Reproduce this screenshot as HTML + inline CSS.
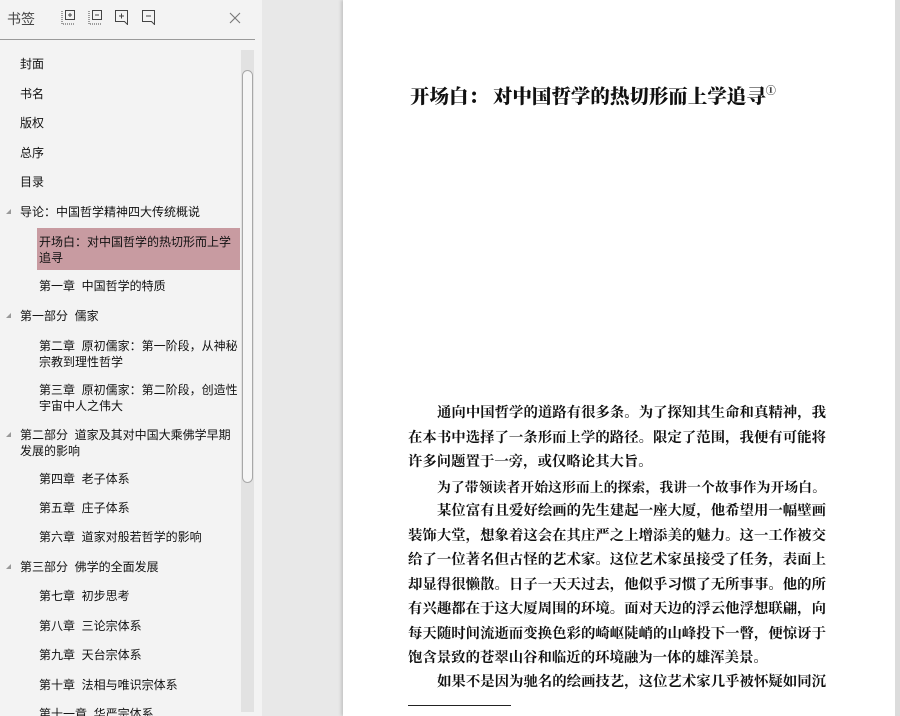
<!DOCTYPE html>
<html><head><meta charset="utf-8"><style>
*{margin:0;padding:0;box-sizing:border-box}
html,body{width:900px;height:716px;overflow:hidden}
body{background:#e8e8e8;position:relative;font-family:"Liberation Sans","Noto Sans CJK SC",sans-serif}
#side{position:absolute;left:0;top:0;width:262px;height:716px;background:#f3f3f3;overflow:hidden}
.hd{position:absolute;left:7px;top:9px;font-size:14px;color:#444}
.ic{position:absolute;top:10px}
.hr{position:absolute;left:0;top:39px;width:255px;height:1px;background:#9a9a9a}
.it{position:absolute;font-size:12px;color:#111;line-height:16px;white-space:nowrap}
.l1{left:20px}.l2{left:39px}
.ar{position:absolute;left:6px;width:0;height:0;border-left:5px solid transparent;border-bottom:5px solid #999}
.hl{position:absolute;left:37px;top:228px;width:203px;height:42px;background:#c89ba1}
#sb{position:absolute;left:241px;top:50px;width:13px;height:662px;background:#e2e2e2}
#th{position:absolute;left:242px;top:70px;width:11px;height:413px;border:1px solid #a8a8a8;border-radius:6px;background:#f6f6f6}
#page{position:absolute;left:343px;top:0;width:552px;height:716px;background:#fff;box-shadow:-2px 0 3px rgba(0,0,0,.15)}
#rg{position:absolute;left:895px;top:0;width:5px;height:716px;background:#dcdcdc}
.ttl{position:absolute;left:410px;top:81px;font-size:19.5px;font-weight:900;color:#111;font-family:"Noto Serif CJK SC","Noto Sans CJK SC",serif;white-space:nowrap}
.ttl sup{font-size:10px;vertical-align:9px}
.ln{position:absolute;left:408px;width:418px;height:24px;font-size:14.4px;line-height:24px;color:#111;font-family:"Noto Serif CJK SC",serif;font-weight:700;white-space:nowrap;text-align:justify;text-align-last:justify}
.ln.i{left:437px;width:389px}
.ln.n{text-align-last:left}
.fn{position:absolute;left:408px;top:705px;width:103px;height:1px;background:#222}
</style></head><body>
<div id="side">
<div class="hd">书签</div>
<svg class="ic" style="left:61px" width="15" height="15" viewBox="0 0 15 15" fill="none" stroke="#444"><path d="M1 1v13h13" stroke-dasharray="1 1"/><rect x="4.5" y="0.5" width="9" height="9"/><path d="M7 5h4M9 3v4"/></svg>
<svg class="ic" style="left:88px" width="15" height="15" viewBox="0 0 15 15" fill="none" stroke="#444"><path d="M1 1v13h13" stroke-dasharray="1 1"/><rect x="4.5" y="0.5" width="9" height="9"/><path d="M7 5h4"/></svg>
<svg class="ic" style="left:115px" width="14" height="15" viewBox="0 0 14 15" fill="none" stroke="#444"><path d="M0.5 0.5h12v14l-3-3h-9z"/><path d="M4 6h5M6.5 3.5v5"/></svg>
<svg class="ic" style="left:142px" width="14" height="15" viewBox="0 0 14 15" fill="none" stroke="#444"><path d="M0.5 0.5h12v14l-3-3h-9z"/><path d="M4 6h5"/></svg>
<svg style="position:absolute;left:229px;top:12px" width="12" height="12" viewBox="0 0 12 12" stroke="#777" stroke-width="1.1"><path d="M1 1l10 10M11 1L1 11"/></svg>
<div class="hr"></div>
<div class="hl"></div>
<div class="it l1" style="top:56px">封面</div>
<div class="it l1" style="top:86px">书名</div>
<div class="it l1" style="top:115px">版权</div>
<div class="it l1" style="top:145px">总序</div>
<div class="it l1" style="top:174px">目录</div>
<div class="ar" style="top:209px"></div><div class="it l1" style="top:204px">导论：中国哲学精神四大传统概说</div>
<div class="it l2" style="top:234px">开场白：对中国哲学的热切形而上学<br>追寻</div>
<div class="it l2" style="top:278px">第一章&nbsp;&nbsp;中国哲学的特质</div>
<div class="ar" style="top:313px"></div><div class="it l1" style="top:308px">第一部分&nbsp;&nbsp;儒家</div>
<div class="it l2" style="top:338px">第二章&nbsp;&nbsp;原初儒家：第一阶段，从神秘<br>宗教到理性哲学</div>
<div class="it l2" style="top:382px">第三章&nbsp;&nbsp;原初儒家：第二阶段，创造性<br>宇宙中人之伟大</div>
<div class="ar" style="top:432px"></div><div class="it l1" style="top:427px">第二部分&nbsp;&nbsp;道家及其对中国大乘佛学早期<br>发展的影响</div>
<div class="it l2" style="top:471px">第四章&nbsp;&nbsp;老子体系</div>
<div class="it l2" style="top:500px">第五章&nbsp;&nbsp;庄子体系</div>
<div class="it l2" style="top:529px">第六章&nbsp;&nbsp;道家对般若哲学的影响</div>
<div class="ar" style="top:564px"></div><div class="it l1" style="top:559px">第三部分&nbsp;&nbsp;佛学的全面发展</div>
<div class="it l2" style="top:588px">第七章&nbsp;&nbsp;初步思考</div>
<div class="it l2" style="top:618px">第八章&nbsp;&nbsp;三论宗体系</div>
<div class="it l2" style="top:647px">第九章&nbsp;&nbsp;天台宗体系</div>
<div class="it l2" style="top:677px">第十章&nbsp;&nbsp;法相与唯识宗体系</div>
<div class="it l2" style="top:706px">第十一章&nbsp;&nbsp;华严宗体系</div>
<div id="sb"></div><div id="th"></div>
</div>
<div id="page"></div>
<div id="rg"></div>
<div class="ttl">开场白：&nbsp;对中国哲学的热切形而上学追寻<sup>①</sup></div>
<div class="ln i" style="top:400px">通向中国哲学的道路有很多条。为了探知其生命和真精神，我</div>
<div class="ln" style="top:425px">在本书中选择了一条形而上学的路径。限定了范围，我便有可能将</div>
<div class="ln n" style="top:449px">许多问题置于一旁，或仅略论其大旨。</div>
<div class="ln i" style="top:474px;font-size:13.8px">为了带领读者开始这形而上的探索，我讲一个故事作为开场白。</div>
<div class="ln i" style="top:498px">某位富有且爱好绘画的先生建起一座大厦，他希望用一幅壁画</div>
<div class="ln" style="top:523px">装饰大堂，想象着这会在其庄严之上增添美的魅力。这一工作被交</div>
<div class="ln" style="top:547px">给了一位著名但古怪的艺术家。这位艺术家虽接受了任务，表面上</div>
<div class="ln" style="top:572px">却显得很懒散。日子一天天过去，他似乎习惯了无所事事。他的所</div>
<div class="ln" style="top:596px">有兴趣都在于这大厦周围的环境。面对天边的浮云他浮想联翩，向</div>
<div class="ln" style="top:621px">每天随时间流逝而变换色彩的崎岖陡峭的山峰投下一瞥，便惊讶于</div>
<div class="ln n" style="top:645px">饱含景致的苍翠山谷和临近的环境融为一体的雄浑美景。</div>
<div class="ln i" style="top:669px">如果不是因为驰名的绘画技艺，这位艺术家几乎被怀疑如同沉</div>
<div class="fn"></div>
</body></html>
